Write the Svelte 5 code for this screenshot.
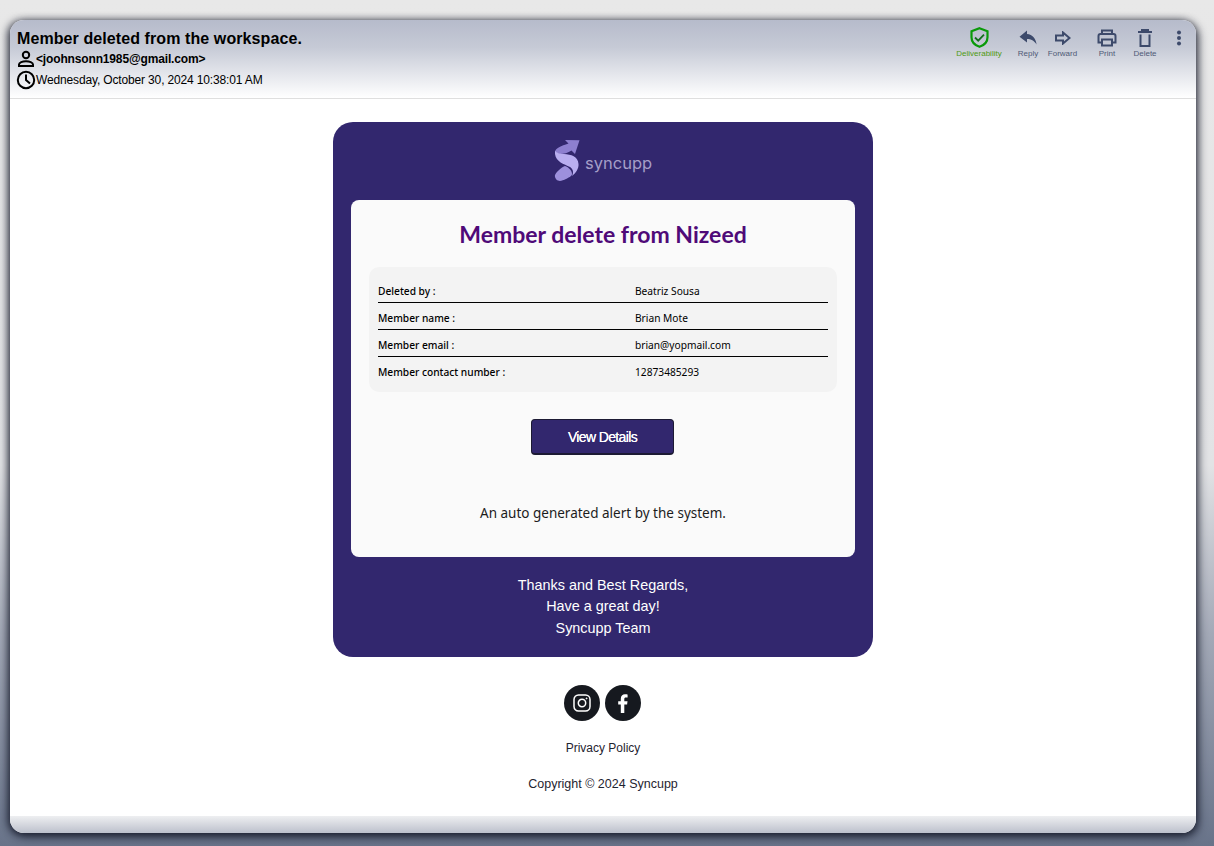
<script>
  const rows = [
    { label: "Deleted by :", value: "Beatriz Sousa" },
    { label: "Member name :", value: "Brian Mote" },
    { label: "Member email :", value: "brian@yopmail.com" },
    { label: "Member contact number :", value: "12873485293" },
  ];
</script>

<div class="page">
  <div class="window">
    <header class="head">
      <div class="meta">
        <h1>Member deleted from the workspace.</h1>
        <div class="line from">
          <svg width="18" height="18" viewBox="0 0 18 18" fill="none" stroke="#000" stroke-width="2">
            <circle cx="9" cy="5" r="3.2" />
            <path d="M2 16v-1.5c0-2 3.5-3.3 7-3.3s7 1.3 7 3.3V16z" />
          </svg>
          <span>&lt;joohnsonn1985@gmail.com&gt;</span>
        </div>
        <div class="line date">
          <svg width="20" height="20" viewBox="0 0 20 20" fill="none" stroke="#000" stroke-width="2">
            <circle cx="10" cy="10" r="8.2" />
            <path d="M10 4.5V10l4 3.5" />
          </svg>
          <span>Wednesday, October 30, 2024 10:38:01 AM</span>
        </div>
      </div>
      <div class="actions">
        <div class="act deliver">
          <svg width="19" height="21" viewBox="0 0 19 21" fill="none" stroke="#0a9a0a" stroke-width="2.2">
            <path d="M9.5 1.2l8 3v6c0 4.8-3.4 8-8 9.6-4.6-1.6-8-4.8-8-9.6v-6z" />
            <path d="M5 10.5l3.200 3.200 5.800-6" stroke="#14701e" stroke-width="1.8" />
          </svg>
          <span>Deliverability</span>
        </div>
        <div class="act reply">
          <svg width="18" height="15" viewBox="0 0 18 15" fill="#3d4a6b">
            <path d="M8 .5L.5 6.8 8 12.500V9c4.200 0 7 1.500 9.500 5.500C17 8.500 13.500 4.500 8 4z" />
          </svg>
          <span>Reply</span>
        </div>
        <div class="act forward">
          <svg width="16" height="14" viewBox="0 0 16 14" fill="none" stroke="#3d4a6b" stroke-width="2">
            <path d="M1 4.500h7V1.500L14.500 7 8 12.500v-3H1z" />
          </svg>
          <span>Forward</span>
        </div>
        <div class="act print">
          <svg width="20" height="18" viewBox="0 0 20 18" fill="none" stroke="#3d4a6b" stroke-width="2">
            <path d="M5 5V1.500h10V5" />
            <path d="M5 13.500H1.500V7q0-2 2-2h13q2 0 2 2v6.500H15" />
            <path d="M5 10.500h10v6H5z" />
          </svg>
          <span>Print</span>
        </div>
        <div class="act trash">
          <svg width="14" height="18" viewBox="0 0 14 18" fill="none" stroke="#3d4a6b" stroke-width="2">
            <path d="M0 3h14M4 3V1h6v2" />
            <path d="M2.500 5.500V17h9V5.500" />
          </svg>
          <span>Delete</span>
        </div>
        <svg class="more" width="6" height="16" viewBox="0 0 6 16" fill="#3d4a6b">
          <circle cx="3" cy="2.500" r="2" />
          <circle cx="3" cy="8" r="2" />
          <circle cx="3" cy="13.500" r="2" />
        </svg>
      </div>
    </header>

    <main class="body">
      <div class="card">
        <div class="logo">
          <svg width="27" height="43" viewBox="0 0 27 43">
            <path d="M11 1L25.500 1.300 21 15 17.500 11.500C14 14 10 15 6 15L1 13C1.500 9 7 7 14.500 4.500z" fill="#8d7fd0" />
            <path d="M1 12C3 14 6 15 10 15 17 15.500 24 17 24.500 25 25 29 22 34 18 37 20 33 19 30 16 28 10 25 2 23 1 15z" fill="#b9aef0" />
            <path d="M1 36C3 32 8 28 11 27 14 28 18 31 18 35 18 37 15 38.500 12 40 9 41.500 6 42.500 4 41.500 2 41 .5 38 1 36z" fill="#9d90dc" />
          </svg>
          <span>syncupp</span>
        </div>

        <div class="panel">
          <h2>Member delete from Nizeed</h2>
          <div class="info">
            {#each rows as row}
              <div class="row">
                <div class="label">{row.label}</div>
                <div class="value">{row.value}</div>
              </div>
            {/each}
          </div>
          <div class="btn">View Details</div>
          <p class="auto">An auto generated alert by the system.</p>
        </div>

        <div class="regards">
          <div>Thanks and Best Regards,</div>
          <div>Have a great day!</div>
          <div>Syncupp Team</div>
        </div>
      </div>

      <div class="social">
        <div class="circle">
          <svg width="18" height="18" viewBox="0 0 18 18" fill="none" stroke="#fff" stroke-width="1.5">
            <rect x="1" y="1" width="16" height="16" rx="4.500" />
            <circle cx="9" cy="9" r="3.700" />
            <circle cx="13.600" cy="4.400" r="0.500" fill="#fff" stroke-width="1" />
          </svg>
        </div>
        <div class="circle">
          <svg width="10" height="19" viewBox="0 0 10 19" fill="#fff">
            <path d="M2.800 19V10.500H.2V7.200h2.600V4.800C2.800 1.800 4.500.3 7 .3c1.200 0 2.300.1 2.600.2v3H7.900c-1.300 0-1.600.7-1.600 1.600v2.100h3.200l-.4 3.300H6.300V19z" />
          </svg>
        </div>
      </div>
      <div class="privacy">Privacy Policy</div>
      <div class="copy">Copyright © 2024 Syncupp</div>
    </main>

    <div class="foot"></div>
  </div>
</div>

<style>
  :global(body) {
    margin: 0;
  }

  .page {
    box-sizing: border-box;
    height: 846px;
    padding: 20px 18px 13px 10px;
    background: linear-gradient(180deg, #e8e8e8 0%, #e2e3e5 55%, #a3a9b7 75%, #687389 100%);
    font-family: "Liberation Sans", Arial, sans-serif;
    overflow: hidden;
  }

  .window {
    height: 813px;
    display: flex;
    flex-direction: column;
    border-radius: 14px;
    background: #fff;
    overflow: hidden;
    box-shadow: -2px 1px 8px rgba(20, 24, 40, 0.75), 2px 3px 10px rgba(20, 24, 40, 0.8);
  }

  .head {
    box-sizing: border-box;
    height: 79px;
    display: flex;
    justify-content: space-between;
    padding: 9px 14px 0 6px;
    background: linear-gradient(180deg, #b6bbcb 0%, #c6cad6 35%, #ffffff 100%);
    border-bottom: 1px solid #dfdfdf;
  }

  h1 {
    margin: 0 0 0 1px;
    font-size: 16px;
    line-height: 19px;
    font-weight: 700;
    letter-spacing: 0.09px;
    color: #000;
  }

  .line {
    display: flex;
    align-items: center;
    font-size: 12px;
    color: #000;
  }

  .from {
    height: 20px;
    margin-top: 1px;
    padding-left: 1px;
    gap: 1px;
    font-weight: 700;
    letter-spacing: -0.15px;
  }

  .date {
    height: 20px;
    margin-top: 1px;
    letter-spacing: -0.15px;
  }

  .actions {
    display: flex;
    align-items: flex-start;
  }

  .act {
    display: flex;
    flex-direction: column;
    align-items: center;
    height: 31px;
    margin-top: -2px;
    font-size: 8px;
    color: #4f5a76;
  }

  .act svg {
    margin: auto 0;
  }

  .act span {
    margin-top: 1px;
    line-height: 9px;
    white-space: nowrap;
  }

  .deliver {
    width: 48px;
    color: #4e9a10;
  }

  .reply {
    width: 24px;
    margin-left: 13px;
  }

  .forward {
    width: 32px;
    margin-left: 6.5px;
  }

  .print {
    width: 24px;
    margin-left: 16.5px;
  }

  .trash {
    width: 26px;
    margin-left: 13px;
  }

  .more {
    margin: 1px 0 0 18px;
  }

  .body {
    flex: 1;
    display: flex;
    flex-direction: column;
    align-items: center;
    padding-top: 23px;
  }

  .card {
    box-sizing: border-box;
    width: 540px;
    height: 535px;
    padding: 0 18px;
    background: #32276e;
    border-radius: 20px;
  }

  .logo {
    height: 78px;
    display: flex;
    align-items: center;
    padding-left: 203px;
  }

  .logo svg {
    margin-top: -1px;
  }

  .logo span {
    margin-top: 3px;
    margin-left: 4px;
    font-family: "Inter", sans-serif;
    font-size: 16.500px;
    color: #a59ec8;
  }

  .panel {
    box-sizing: border-box;
    height: 357px;
    padding: 0 18px;
    background: #fafafa;
    border-radius: 8px;
    overflow: hidden;
  }

  h2 {
    margin: 19px 0 18px;
    font-family: "Lato", sans-serif;
    font-size: 23px;
    line-height: 30px;
    font-weight: 700;
    text-align: center;
    color: #4f0a78;
  }

  .info {
    box-sizing: border-box;
    height: 125px;
    padding: 9px 9px 0;
    background: #f3f3f3;
    border-radius: 10px;
  }

  .row {
    box-sizing: border-box;
    height: 27px;
    display: flex;
    align-items: center;
    padding-top: 3px;
    border-bottom: 1px solid #000;
    font-family: "Noto Sans", sans-serif;
    font-size: 10.200px;
    color: #000;
  }

  .row:last-child {
    border-bottom: 0;
  }

  .label {
    width: 257px;
    font-weight: 500;
  }

  .btn {
    box-sizing: border-box;
    width: 143px;
    height: 36px;
    margin: 27px 0 0 162px;
    background: #32276e;
    border: 1px solid #1c1a33;
    border-bottom-width: 2px;
    border-radius: 4px;
    color: #fff;
    font-size: 14px;
    line-height: 35px;
    text-align: center;
    letter-spacing: -0.63px;
    text-shadow: 0 0 0.5px #fff;
  }

  .auto {
    margin: 48px 0 0;
    font-family: "Noto Sans", sans-serif;
    font-size: 13.500px;
    line-height: 20px;
    text-align: center;
    color: #1c1c1c;
  }

  .regards {
    padding-top: 18px;
    font-size: 14.400px;
    line-height: 21.400px;
    text-align: center;
    color: #fff;
  }

  .social {
    display: flex;
    gap: 5px;
    margin: 28px 1px 0 0;
  }

  .circle {
    width: 36px;
    height: 36px;
    display: flex;
    align-items: center;
    justify-content: center;
    background: #16191f;
    border-radius: 50%;
  }

  .privacy {
    margin-top: 19px;
    font-size: 12px;
    line-height: 16px;
    color: #1f2430;
  }

  .copy {
    margin-top: 20px;
    font-size: 12.500px;
    line-height: 16px;
    color: #1f2430;
  }

  .foot {
    height: 17px;
    background: linear-gradient(180deg, #eeeff1 0%, #bcc0cc 100%);
  }
</style>
